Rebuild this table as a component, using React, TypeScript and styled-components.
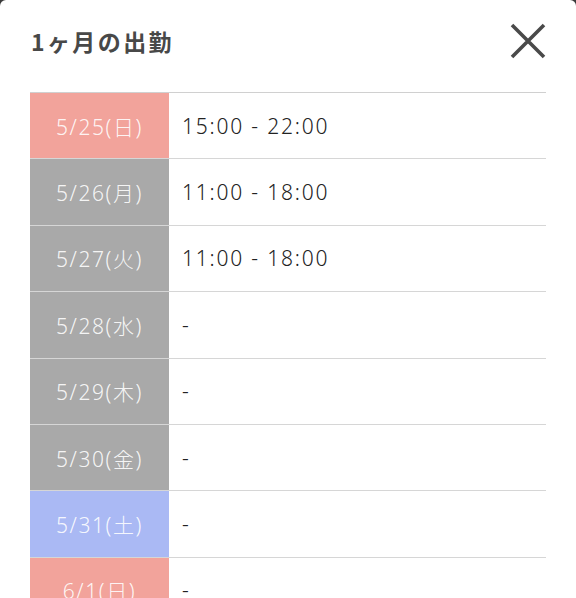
import React from 'react';
import styled, { createGlobalStyle } from 'styled-components';

const GlobalStyle = createGlobalStyle`
  html, body {
    margin: 0;
    padding: 0;
    background: #3a3a3a;
  }
  body {
    font-family: "Noto Sans", "Noto Sans CJK JP", sans-serif;
  }
`;

const Modal = styled.div`
  width: 576px;
  height: 598px;
  background: #fff;
  border-radius: 6px 6px 0 0;
  overflow: hidden;
  box-sizing: border-box;
  padding: 0 30px;
`;

const Header = styled.div`
  display: flex;
  align-items: center;
  justify-content: space-between;
  height: 92px;
  padding-bottom: 10px;
  box-sizing: border-box;
`;

const Title = styled.h2`
  margin: 0;
  font-family: "Noto Sans CJK JP", sans-serif;
  font-size: 23px;
  font-weight: 700;
  color: #484848;
  letter-spacing: 2.4px;
  padding-left: 1px;
`;

const CloseButton = styled.button`
  display: flex;
  align-items: center;
  justify-content: center;
  width: 40px;
  height: 40px;
  margin-right: -2px;
  padding: 0;
  border: none;
  background: none;
  cursor: pointer;
`;

const Table = styled.div`
  border-top: 1px solid #d0d0d0;
`;

type DayKind = 'sun' | 'sat' | 'weekday';

const dayColors: Record<DayKind, string> = {
  sun: '#f2a39b',
  sat: '#aab9f4',
  weekday: '#a9a9a9',
};

const Row = styled.div`
  display: grid;
  grid-template-columns: 139px 1fr;
  height: 66.4px;
  border-bottom: 1px solid #d6d6d6;
  box-sizing: border-box;
`;

const DateCell = styled.div<{ $kind: DayKind }>`
  display: flex;
  align-items: center;
  justify-content: center;
  background: ${props => dayColors[props.$kind]};
  color: rgba(255, 255, 255, 0.9);
  font-size: 21px;
  font-weight: 300;
  letter-spacing: 1.6px;
`;

const TimeCell = styled.div`
  display: flex;
  align-items: center;
  padding-left: 13px;
  color: #222;
  font-size: 21px;
  font-weight: 300;
  letter-spacing: 1.8px;
`;

const schedule: { date: string; kind: DayKind; time: string }[] = [
  { date: '5/25(日)', kind: 'sun', time: '15:00 - 22:00' },
  { date: '5/26(月)', kind: 'weekday', time: '11:00 - 18:00' },
  { date: '5/27(火)', kind: 'weekday', time: '11:00 - 18:00' },
  { date: '5/28(水)', kind: 'weekday', time: '-' },
  { date: '5/29(木)', kind: 'weekday', time: '-' },
  { date: '5/30(金)', kind: 'weekday', time: '-' },
  { date: '5/31(土)', kind: 'sat', time: '-' },
  { date: '6/1(日)', kind: 'sun', time: '-' },
];

export default function App() {
  return (
    <>
      <GlobalStyle />
      <Modal>
        <Header>
          <Title>1ヶ月の出勤</Title>
          <CloseButton aria-label="閉じる">
            <svg width="36" height="36" viewBox="0 0 36 36">
              <path d="M2 2 L34 34 M34 2 L2 34" stroke="#4a4a4a" strokeWidth="3.6" />
            </svg>
          </CloseButton>
        </Header>
        <Table>
          {schedule.map(day => (
            <Row key={day.date}>
              <DateCell $kind={day.kind}>{day.date}</DateCell>
              <TimeCell>{day.time}</TimeCell>
            </Row>
          ))}
        </Table>
      </Modal>
    </>
  );
}
